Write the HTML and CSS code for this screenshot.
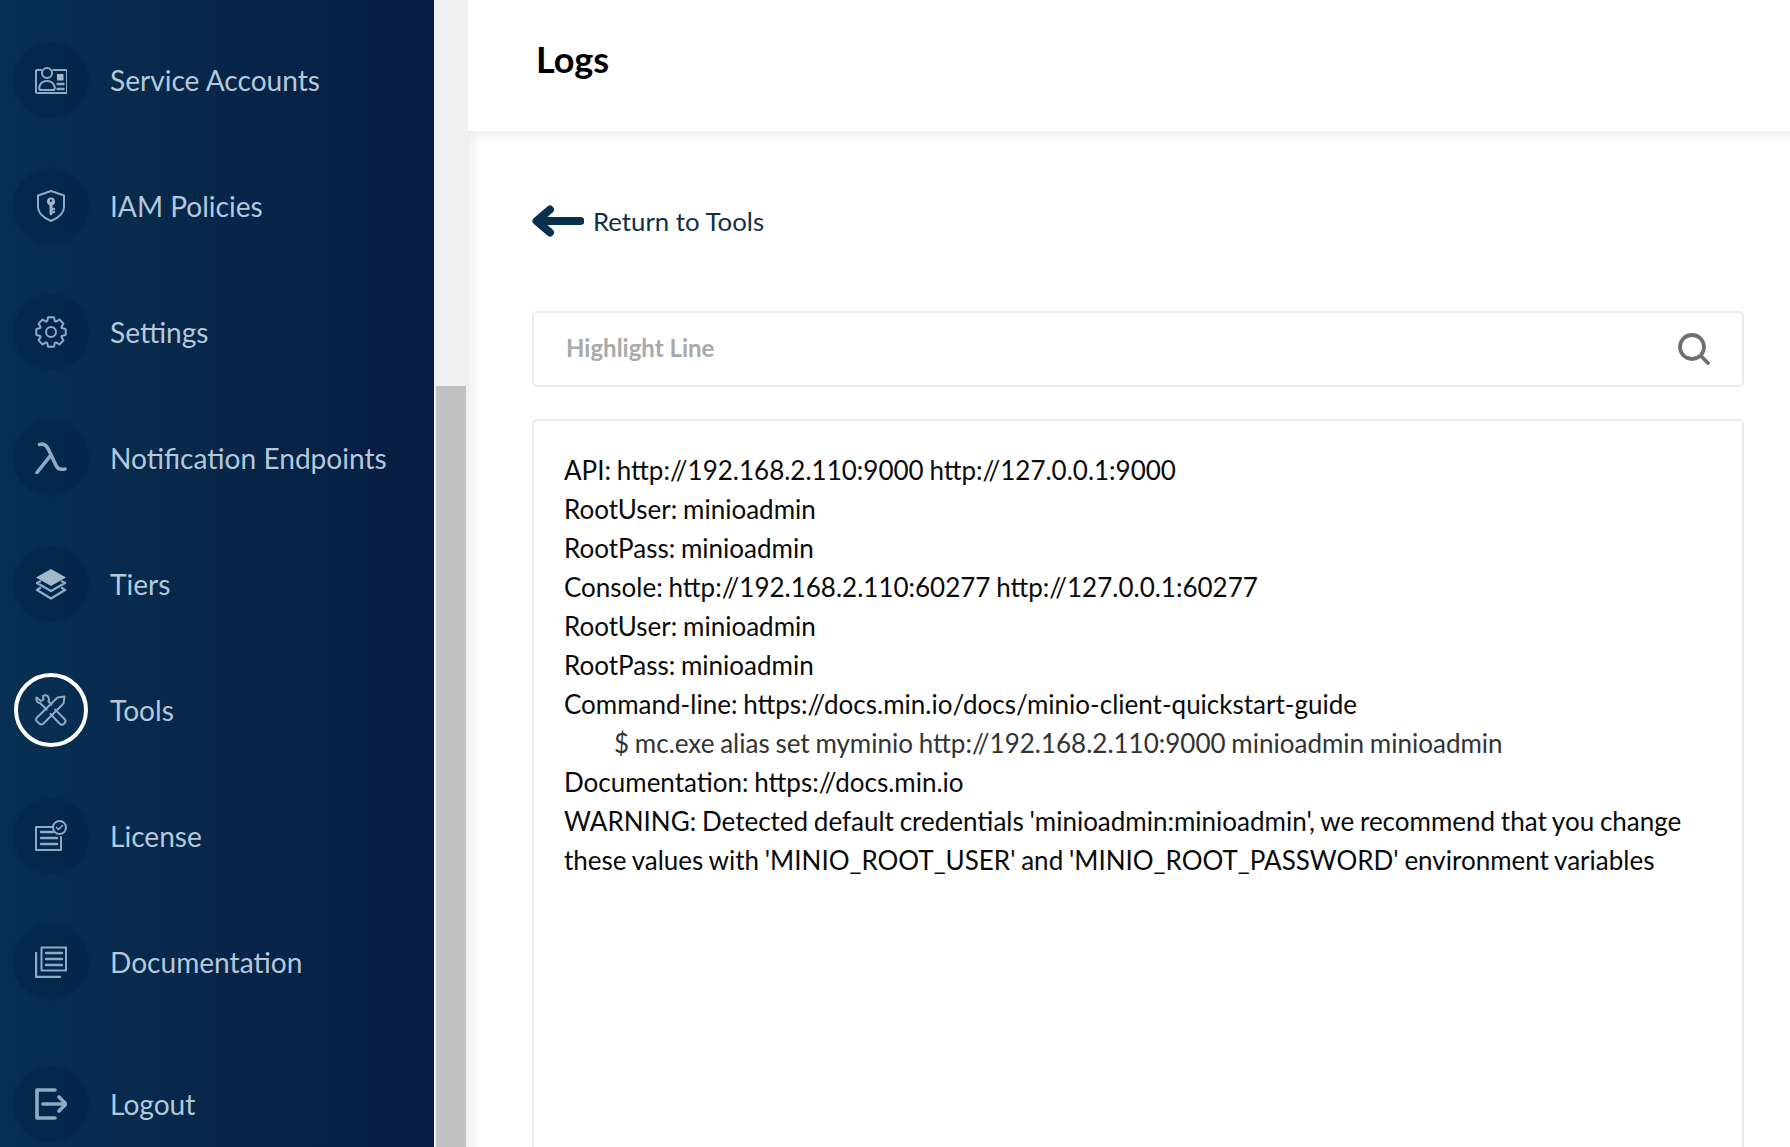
FILE: index.html
```html
<!DOCTYPE html>
<html lang="en">
<head>
<meta charset="utf-8">
<title>Logs</title>
<link rel="stylesheet" href="styles.css">
</head>
<body>
<div class="app">
  <nav class="sidebar">
    <ul class="menu">
      <li class="item"><span class="bubble"><svg class="icon" viewBox="0 0 32 32"><path d="M6 6H2a1 1 0 0 0-1 1v21a1 1 0 0 0 1 1h29a1 1 0 0 0 1-1V7a1 1 0 0 0-1-1H18" fill="none"/><circle cx="12" cy="9" r="5" fill="none"/><path d="M5 26c-1-1-1-3 0-5 1.500-3 4-4 7-4s5.500 1 7 4c1 2 1 4 0 5z" fill="none"/><rect class="solid" x="22" y="10" width="6.500" height="6.500"/><path d="M22.500 20h6M22.500 25h6" class="mid"/></svg></span><span class="label">Service Accounts</span></li>
      <li class="item"><span class="bubble"><svg class="icon" viewBox="0 0 32 32"><path d="M16 1 29 5.500V17c0 6.500-6 11-13 14C9 28 3 23.500 3 17V5.500z" fill="none"/><path class="solid" fill-rule="evenodd" d="M16 7.500a4 4 0 0 1 1.500 7.700V24l-1.500 1.800-1.500-1.800v-8.800A4 4 0 0 1 16 7.500zm0 2a1.200 1.200 0 1 0 0 2.400 1.200 1.200 0 0 0 0-2.400z"/><path class="mid" d="M17 19h2M17 22h2"/></svg></span><span class="label">IAM Policies</span></li>
      <li class="item"><span class="bubble"><svg class="icon" viewBox="0 0 32 32"><path fill="none" d="M13.140 1.280 18.860 1.280 19.930 5.190 20.860 5.580 24.390 3.560 28.440 7.610 26.420 11.140 26.810 12.070 30.720 13.140 30.720 18.860 26.810 19.930 26.420 20.860 28.440 24.390 24.390 28.440 20.860 26.420 19.930 26.810 18.860 30.720 13.140 30.720 12.070 26.810 11.140 26.420 7.610 28.440 3.560 24.390 5.580 20.860 5.190 19.930 1.280 18.860 1.280 13.140 5.190 12.070 5.580 11.140 3.560 7.610 7.610 3.560 11.140 5.580 12.070 5.190z"/><circle cx="16" cy="16" r="5" fill="none"/></svg></span><span class="label">Settings</span></li>
      <li class="item"><span class="bubble"><svg class="icon" viewBox="0 0 32 32"><path class="thick" d="M4.500 2.500c5-1.500 7.500 1 9.500 6l7 15c1.500 3.500 4 4.500 9 3.500M16 13 2 30.500" fill="none"/></svg></span><span class="label">Notification Endpoints</span></li>
      <li class="item"><span class="bubble"><svg class="icon" viewBox="0 0 32 32"><path class="solid" d="M16 1 31 9.500 16 18 1 9.500z"/><path class="mid" d="M2 15l14 8 14-8M2 22l14 8.500L30 22M2 15l3-1.500M30 15l-3-1.500M2 22l3-2M30 22l-3-2" fill="none"/></svg></span><span class="label">Tiers</span></li>
      <li class="item current"><span class="bubble"><svg class="icon" viewBox="0 0 32 32"><path d="M2 23.500 22.500 3.500 29.500 2.500 28.500 9.500 8.500 29.500a3 3 0 0 1-4.200 0L2 27.500a3 3 0 0 1 0-4z" fill="none"/><path d="M20 15.500 29.500 25a3 3 0 0 1 0 4.200l-.5.500a3 3 0 0 1-4.200 0L15.500 20" fill="none"/><path d="M11.500 15.500 5 9C2 9 1 6 1.500 3.500L6 7l2.500-1.500L8 2c3-2 6 0 6 3.500l-.5 2 3 3" fill="none"/></svg></span><span class="label">Tools</span></li>
      <li class="item"><span class="bubble"><svg class="icon" viewBox="0 0 32 32"><path d="M17 7H1v23h25V17" fill="none"/><path class="mid" d="M6 12h12M6 18h16M6 24h16"/><circle cx="24.500" cy="7.500" r="6.500" fill="none"/><path class="fine" d="M21.500 7.500l2 2 4-4" fill="none"/></svg></span><span class="label">License</span></li>
      <li class="item"><span class="bubble"><svg class="icon" viewBox="0 0 32 32"><path d="M1 7v24h24" fill="none" class="mid"/><rect x="6.500" y="1.500" width="24.500" height="23" fill="none"/><path class="mid" d="M11 7h16M11 13h16M11 19h16"/></svg></span><span class="label">Documentation</span></li>
      <li class="item logout"><span class="bubble"><svg class="icon" viewBox="0 0 32 32"><path class="thick" d="M20 2H2v28h18" fill="none"/><path class="thick" d="M8 16h21M24 9l7 7-7 7" fill="none"/></svg></span><span class="label">Logout</span></li>
    </ul>
  </nav>
  <div class="gutter"><div class="thumb"></div></div>
  <main class="main">
    <header class="topbar"><h1 class="title">Logs</h1></header>
    <section class="content">
      <a class="back"><svg class="back-icon" viewBox="0 0 52 32"><path d="M48.500 16H7M18 4.500 4.500 16 18 27.500" fill="none"/></svg><span>Return to Tools</span></a>
      <div class="search">
        <span class="placeholder">Highlight Line</span>
        <svg class="search-icon" viewBox="0 0 32 32"><circle cx="14" cy="14" r="12" fill="none"/><path d="M23 23l7 7" fill="none"/></svg>
      </div>
      <div class="log">
        <div>API: http://192.168.2.110:9000 http://127.0.0.1:9000</div>
        <div>RootUser: minioadmin</div>
        <div>RootPass: minioadmin</div>
        <div>Console: http://192.168.2.110:60277 http://127.0.0.1:60277</div>
        <div>RootUser: minioadmin</div>
        <div>RootPass: minioadmin</div>
        <div>Command-line: https://docs.min.io/docs/minio-client-quickstart-guide</div>
        <div class="cmd">$ mc.exe alias set myminio http://192.168.2.110:9000 minioadmin minioadmin</div>
        <div>Documentation: https://docs.min.io</div>
        <div>WARNING: Detected default credentials 'minioadmin:minioadmin', we recommend that you change these values with 'MINIO_ROOT_USER' and 'MINIO_ROOT_PASSWORD' environment variables</div>
      </div>
    </section>
  </main>
</div>
</body>
</html>
```
FILE: styles.css
```css
* { box-sizing: border-box; }
html, body { margin: 0; height: 100%; overflow: hidden; background: #fff; }
body { font-family: Lato, "Noto Sans", sans-serif; }
.app { display: flex; width: 1790px; height: 1147px; overflow: hidden; }

.sidebar { flex: 0 0 434px; height: 100%; background: linear-gradient(90deg, #073052 0%, #081c42 100%); overflow: hidden; }
.menu { list-style: none; margin: 0; padding: 17px 0 0 14px; display: flex; flex-direction: column; }
.item { display: flex; align-items: center; height: 126px; flex: 0 0 126px; gap: 22px; }
.logout { margin-top: 16px; }
.bubble { flex: 0 0 74px; width: 74px; height: 74px; border-radius: 50%; background: rgba(0, 30, 70, .4); box-shadow: 0 0 3px rgba(0, 25, 60, .5); display: flex; align-items: center; justify-content: center; }
.current .bubble { border: 4px solid #fff; background: transparent; box-shadow: none; }
.icon { width: 32px; height: 32px; margin-left: -1px; stroke: #8eaac4; stroke-width: 2; fill: #8eaac4; stroke-linecap: round; stroke-linejoin: round; }
.icon .solid { fill: #a3b8cc; stroke: none; }
.icon .thick { stroke-width: 3.600; }
.icon .mid { stroke-width: 2.400; }
.icon .fine { stroke-width: 1.600; }
.label { font-size: 28.100px; line-height: 34px; color: #b4c8da; white-space: nowrap; }

.gutter { flex: 0 0 34px; height: 100%; background: #f0f0f0; display: flex; flex-direction: column; justify-content: flex-end; padding: 0 2px; }
.thumb { height: 761px; background: #c1c1c1; }

.main { flex: 1; min-width: 0; display: flex; flex-direction: column; height: 100%; }
.topbar { flex: 0 0 131px; padding: 37px 0 0 68px; background: #fff; }
.title { margin: 0; font-size: 36px; line-height: 44px; font-weight: 700; color: #000; }
.content { flex: 1; padding: 72px 46px 0 64px; box-shadow: inset 12px 12px 14px -10px #e8e8e8; }

.back { display: flex; align-items: center; gap: 9px; height: 36px; color: #0f2e48; font-size: 25.800px; line-height: 36px; }
.back-icon { width: 52px; height: 32px; stroke: #08304f; stroke-width: 8; stroke-linecap: round; stroke-linejoin: round; }

.search { margin-top: 72px; height: 76px; border: 2px solid #ebebeb; border-radius: 5px; display: flex; align-items: center; justify-content: space-between; padding: 0 32px 0 32px; }
.placeholder { font-size: 24px; font-weight: 700; color: #a9a9a9; padding-bottom: 3px; }
.search-icon { width: 32px; height: 32px; stroke: #707070; stroke-width: 3.800; stroke-linecap: round; }

.log { margin-top: 32px; height: 800px; border: 2px solid #ebebeb; border-radius: 5px; padding: 30px 30px; font-size: 26px; line-height: 39px; word-spacing: -.9px; color: #0a0a0a; }
.cmd { padding-left: 50px; color: #333; }
```
